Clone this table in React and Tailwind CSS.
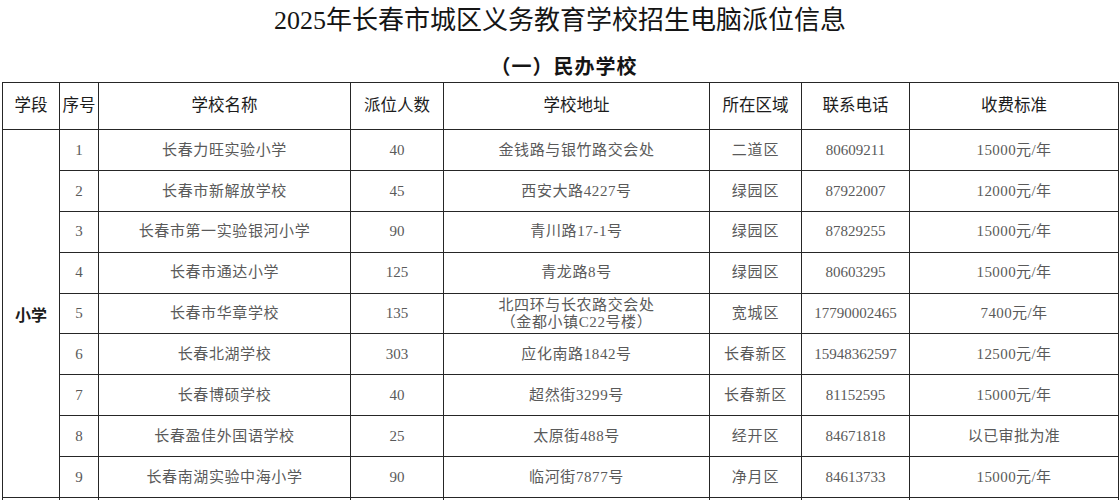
const rows = [
  { no: 1, name: "长春力旺实验小学", count: "40", addr: ["金钱路与银竹路交会处"], area: "二道区", tel: "80609211", fee: "15000元/年" },
  { no: 2, name: "长春市新解放学校", count: "45", addr: ["西安大路4227号"], area: "绿园区", tel: "87922007", fee: "12000元/年" },
  { no: 3, name: "长春市第一实验银河小学", count: "90", addr: ["青川路17-1号"], area: "绿园区", tel: "87829255", fee: "15000元/年" },
  { no: 4, name: "长春市通达小学", count: "125", addr: ["青龙路8号"], area: "绿园区", tel: "80603295", fee: "15000元/年" },
  { no: 5, name: "长春市华章学校", count: "135", addr: ["北四环与长农路交会处", "（金都小镇C22号楼）"], area: "宽城区", tel: "17790002465", fee: "7400元/年" },
  { no: 6, name: "长春北湖学校", count: "303", addr: ["应化南路1842号"], area: "长春新区", tel: "15948362597", fee: "12500元/年" },
  { no: 7, name: "长春博硕学校", count: "40", addr: ["超然街3299号"], area: "长春新区", tel: "81152595", fee: "15000元/年" },
  { no: 8, name: "长春盈佳外国语学校", count: "25", addr: ["太原街488号"], area: "经开区", tel: "84671818", fee: "以已审批为准" },
  { no: 9, name: "长春南湖实验中海小学", count: "90", addr: ["临河街7877号"], area: "净月区", tel: "84613733", fee: "15000元/年" },
];

const headers = ["学段", "序号", "学校名称", "派位人数", "学校地址", "所在区域", "联系电话", "收费标准"];

const cell = "border-[1.5px] border-[#262626] text-center align-middle p-0";

export default function App() {
  return (
    <div className="w-[1120px] h-[500px] overflow-hidden bg-white" style={{ fontFamily: '"Liberation Serif", "Noto Sans CJK SC", serif' }}>
      <div className="h-[40px] flex items-center justify-center text-[26px] text-[#151515]">
        2025年长春市城区义务教育学校招生电脑派位信息
      </div>
      <div className="h-[42px] pt-[10px] pl-[8px] flex items-center justify-center text-[20px] font-bold tracking-[1px] text-[#151515]" style={{ fontFamily: '"Noto Sans CJK SC", sans-serif' }}>
        （一）民办学校
      </div>

      <table className="ml-[2px] w-[1116px] table-fixed border-collapse">
        <colgroup>
          <col className="w-[57px]" />
          <col className="w-[39px]" />
          <col className="w-[252px]" />
          <col className="w-[93px]" />
          <col className="w-[266px]" />
          <col className="w-[92px]" />
          <col className="w-[108px]" />
          <col className="w-[209px]" />
        </colgroup>
        <thead>
          <tr className="h-[47px]">
            {headers.map((h) => (
              <th key={h} className={`${cell} text-[16.5px] font-normal text-[#1c1c1c] whitespace-nowrap`}>
                {h}
              </th>
            ))}
          </tr>
        </thead>
        <tbody className="text-[15px] text-[#5a5a5a]">
          {rows.map((r, i) => (
            <tr key={r.no} className="h-[40.9px]">
              {i === 0 && (
                <td rowSpan={9} className={`${cell} text-[16px] font-bold text-[#1c1c1c]`} style={{ fontFamily: '"Noto Sans CJK SC", sans-serif' }}>
                  小学
                </td>
              )}
              <td className={cell}>{r.no}</td>
              <td className={`${cell} tracking-[0.6px]`}>{r.name}</td>
              <td className={cell}>{r.count}</td>
              <td className={`${cell} tracking-[0.6px]`}>
                {r.addr.length > 1 ? (
                  <div className="leading-[17px]">
                    {r.addr.map((a) => (
                      <div key={a}>{a}</div>
                    ))}
                  </div>
                ) : (
                  r.addr[0]
                )}
              </td>
              <td className={`${cell} tracking-[0.8px]`}>{r.area}</td>
              <td className={cell}>{r.tel}</td>
              <td className={`${cell} tracking-[0.4px]`}>{r.fee}</td>
            </tr>
          ))}
          <tr className="h-[40.9px]">
            {headers.map((h) => (
              <td key={h} className={cell}>&nbsp;</td>
            ))}
          </tr>
        </tbody>
      </table>
    </div>
  );
}
